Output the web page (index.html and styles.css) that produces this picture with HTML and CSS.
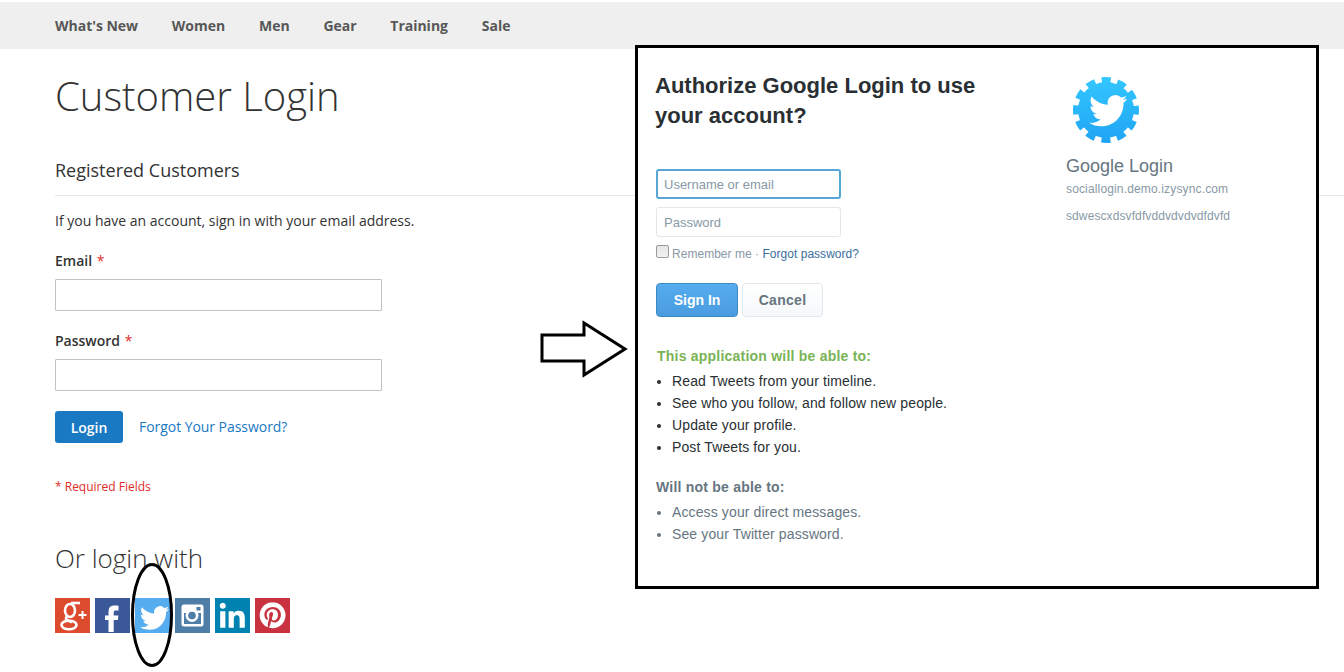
FILE: index.html
```html
<!DOCTYPE html>
<html lang="en">
<head>
<meta charset="utf-8">
<title>Customer Login</title>
<link rel="stylesheet" href="styles.css">
</head>
<body>
<nav class="nav">
  <a>What's New</a><a>Women</a><a>Men</a><a>Gear</a><a>Training</a><a>Sale</a>
</nav>
<main class="main">
  <h1 class="title">Customer Login</h1>
  <h2 class="subtitle">Registered Customers</h2>
  <p class="intro">If you have an account, sign in with your email address.</p>
  <label class="label">Email <span class="req">*</span></label>
  <input class="field" type="text">
  <label class="label label-pw">Password <span class="req">*</span></label>
  <input class="field" type="password">
  <div class="actions">
    <button class="login">Login</button>
    <a class="forgot">Forgot Your Password?</a>
  </div>
  <p class="required">* Required Fields</p>
  <h3 class="orlogin">Or login with</h3>
  <div class="socials">
    <span class="soc gp"><svg viewBox="0 0 35 35" width="35" height="35"><g fill="none" stroke="#fff" stroke-width="2.6"><ellipse cx="15" cy="12.500" rx="5" ry="6.500"/><ellipse cx="14" cy="27" rx="7.500" ry="4.300"/><path d="M12 18.500c-2 1.500-1 3 1 4l4 1.800"/><path d="M16 5h9"/></g><path d="M26.500 13h2v3h3v2h-3v3h-2v-3h-3v-2h3z" fill="#fff"/></svg></span>
    <span class="soc fb"><svg viewBox="0 0 35 35" width="35" height="35"><path d="M13.500 34V22H10v-4.500h3.500V14C13.500 9.500 15.500 7.500 19.500 7.500c1.500 0 3 .1 4 .2V12.500h-2.500c-1.700 0-2.300.6-2.300 2.200v2.800h4.700L22.800 22h-4.100v12z" fill="#fff"/></svg></span>
    <span class="soc tw"><svg viewBox="0 0 24 24" width="35" height="35"><g transform="translate(3.400 3.800) scale(.83)"><path d="M23.953 4.570a10 10 0 01-2.825.775 4.958 4.958 0 002.163-2.723c-.951.555-2.005.959-3.127 1.184a4.920 4.920 0 00-8.384 4.482C7.690 8.095 4.067 6.130 1.640 3.162a4.822 4.822 0 00-.666 2.475c0 1.710.870 3.213 2.188 4.096a4.904 4.904 0 01-2.228-.616v.060a4.923 4.923 0 003.946 4.827 4.996 4.996 0 01-2.212.085 4.936 4.936 0 004.604 3.417 9.867 9.867 0 01-6.102 2.105c-.390 0-.779-.023-1.170-.067a13.995 13.995 0 007.557 2.209c9.053 0 13.998-7.496 13.998-13.985 0-.210 0-.420-.015-.630A9.935 9.935 0 0024 4.590z" fill="#fff"/></g></svg></span>
    <span class="soc ig"><svg viewBox="0 0 35 35" width="35" height="35"><rect x="6.500" y="6.500" width="22" height="22" rx="2.500" fill="#fff"/><rect x="9" y="15" width="17" height="11" fill="#4e7ea8"/><circle cx="17" cy="17.500" r="6.500" fill="#fff"/><circle cx="17" cy="17.500" r="3.800" fill="#4e7ea8"/><rect x="21.500" y="9" width="4" height="3.500" fill="#4e7ea8"/></svg></span>
    <span class="soc li"><svg viewBox="0 0 24 24" width="35" height="35"><path d="M20.447 20.452h-3.554v-5.569c0-1.328-.027-3.037-1.852-3.037-1.853 0-2.136 1.445-2.136 2.939v5.667H9.351V9h3.414v1.561h.046c.477-.900 1.637-1.850 3.370-1.850 3.601 0 4.267 2.370 4.267 5.455v6.286zM5.337 7.433c-1.144 0-2.063-.926-2.063-2.065 0-1.138.920-2.063 2.063-2.063 1.140 0 2.064.925 2.064 2.063 0 1.139-.925 2.065-2.064 2.065zm1.782 13.019H3.555V9h3.564v11.452z" fill="#fff"/></svg></span>
    <span class="soc pi"><svg viewBox="0 0 24 24" width="35" height="35"><g transform="translate(3.200 2.900) scale(.74)"><path d="M12.017 0C5.396 0 .029 5.367.029 11.987c0 5.079 3.158 9.417 7.618 11.162-.105-.949-.199-2.403.041-3.439.219-.937 1.406-5.957 1.406-5.957s-.359-.720-.359-1.781c0-1.663.967-2.911 2.168-2.911 1.024 0 1.518.769 1.518 1.688 0 1.029-.653 2.567-.992 3.992-.285 1.193.600 2.165 1.775 2.165 2.128 0 3.768-2.245 3.768-5.487 0-2.861-2.063-4.869-5.008-4.869-3.410 0-5.409 2.562-5.409 5.199 0 1.033.394 2.143.889 2.741.099.120.112.225.085.345-.090.375-.293 1.199-.334 1.363-.053.225-.172.271-.401.165-1.495-.690-2.433-2.878-2.433-4.646 0-3.776 2.748-7.252 7.920-7.252 4.158 0 7.392 2.967 7.392 6.923 0 4.135-2.607 7.462-6.233 7.462-1.214 0-2.354-.629-2.758-1.379l-.749 2.848c-.269 1.045-1.004 2.352-1.498 3.146 1.123.345 2.306.535 3.550.535 6.607 0 11.985-5.365 11.985-11.987C23.970 5.390 18.592.026 11.985.026L12.017 0z" fill="#fff"/></g></svg></span>
  </div>
</main>

<svg class="ring" width="46" height="108" viewBox="0 0 46 108"><ellipse cx="23" cy="54" rx="19.500" ry="50.500" fill="none" stroke="#000" stroke-width="3"/></svg>
<svg class="arrow" width="96" height="60" viewBox="0 0 96 60"><polygon points="3,15 45,15 45,3 86,29 45,55 45,41 3,41" fill="#fff" stroke="#000" stroke-width="3"/></svg>

<section class="popup">
  <div class="auth">
    <h2 class="auth-title">Authorize Google Login to use your account?</h2>
    <input class="tw-field tw-focus" type="text" placeholder="Username or email">
    <input class="tw-field" type="text" placeholder="Password">
    <div class="remember"><input class="check" type="checkbox"><span class="remember-text">Remember me · <a>Forgot password?</a></span></div>
    <div class="tw-buttons">
      <button class="signin">Sign In</button>
      <button class="cancel">Cancel</button>
    </div>
    <p class="able">This application will be able to:</p>
    <ul class="perm">
      <li>Read Tweets from your timeline.</li>
      <li>See who you follow, and follow new people.</li>
      <li>Update your profile.</li>
      <li>Post Tweets for you.</li>
    </ul>
    <p class="notable">Will not be able to:</p>
    <ul class="perm perm-not">
      <li>Access your direct messages.</li>
      <li>See your Twitter password.</li>
    </ul>
  </div>
  <aside class="app">
    <svg class="gear" width="70" height="70" viewBox="0 0 70 70">
      <defs><linearGradient id="gearfill" gradientUnits="userSpaceOnUse" x1="0" y1="0" x2="0" y2="70"><stop offset="0" stop-color="#35c8ff"/><stop offset="1" stop-color="#1ea3f4"/></linearGradient></defs>
      <circle cx="35" cy="35" r="28" fill="url(#gearfill)"/>
      <circle cx="35" cy="35" r="30" fill="none" stroke="url(#gearfill)" stroke-width="6" stroke-dasharray="9 6.708" stroke-dashoffset="4.500"/>
      <g transform="translate(18 16.500) scale(1.600)"><path d="M23.953 4.570a10 10 0 01-2.825.775 4.958 4.958 0 002.163-2.723c-.951.555-2.005.959-3.127 1.184a4.920 4.920 0 00-8.384 4.482C7.690 8.095 4.067 6.130 1.640 3.162a4.822 4.822 0 00-.666 2.475c0 1.710.870 3.213 2.188 4.096a4.904 4.904 0 01-2.228-.616v.060a4.923 4.923 0 003.946 4.827 4.996 4.996 0 01-2.212.085 4.936 4.936 0 004.604 3.417 9.867 9.867 0 01-6.102 2.105c-.390 0-.779-.023-1.170-.067a13.995 13.995 0 007.557 2.209c9.053 0 13.998-7.496 13.998-13.985 0-.210 0-.420-.015-.630A9.935 9.935 0 0024 4.590z" fill="#fff"/></g>
    </svg>
    <div class="app-name">Google Login</div>
    <div class="app-url">sociallogin.demo.izysync.com</div>
    <div class="app-desc">sdwescxdsvfdfvddvdvdvdfdvfd</div>
  </aside>
</section>
</body>
</html>
```

FILE: styles.css
```css
* { box-sizing: border-box; }
html, body { margin: 0; height: 672px; overflow: hidden; }
body {
  position: relative;
  padding-top: 2px;
  background: #fff;
  font-family: "Open Sans", sans-serif;
  color: #333;
}
.nav {
  display: flex;
  align-items: center;
  gap: 33.8px;
  height: 47px;
  padding-left: 55px;
  background: #efefef;
  font-size: 14px;
  font-weight: 700;
  letter-spacing: -.02px;
  color: #575757;
}
.main { padding: 0 55px; }
.title {
  margin: 21px 0 0;
  font-size: 40px;
  font-weight: 300;
  line-height: 52px;
}
.subtitle {
  margin: 36px -55px 0 0;
  height: 38px;
  border-bottom: 1px solid #e8e8e8;
  font-size: 18px;
  font-weight: 400;
  line-height: 24px;
}
.intro { margin: 15px 0 0; font-size: 14px; line-height: 20px; }
.label {
  display: block;
  margin-top: 20px;
  font-size: 14px;
  font-weight: 600;
  line-height: 20px;
}
.req { color: #e02b27; font-weight: 400; margin-left: 1px; }
.field {
  display: block;
  width: 327px;
  height: 32px;
  margin-top: 8px;
  border: 1px solid #c2c2c2;
  border-radius: 1px;
  background: #fff;
}
.actions { display: flex; align-items: center; gap: 16px; margin-top: 20px; }
.login {
  width: 68px;
  height: 32px;
  border: 0;
  border-radius: 3px;
  background: #1979c3;
  color: #fff;
  font: 600 14px "Open Sans", sans-serif;
}
.forgot { padding-bottom: 2px; color: #1979c3; font-size: 14px; letter-spacing: -.05px; }
.required { margin: 35px 0 0; color: #e02b27; font-size: 12px; line-height: 17px; }
.orlogin { margin: 46px 0 0; font-size: 26px; font-weight: 300; line-height: 34px; }
.socials { display: flex; gap: 5px; margin-top: 23px; }
.soc { display: block; width: 35px; height: 35px; }
.soc svg { display: block; }
.gp { background: #dd4b2e; }
.fb { background: #3b5998; }
.tw { background: #55acee; }
.ig { background: #4e7ea8; }
.li { background: #0083b0; }
.pi { background: #c9323f; }
.ring { position: absolute; left: 129px; top: 561px; }
.arrow { position: absolute; left: 539px; top: 320px; }
.popup {
  position: absolute;
  left: 635px;
  top: 45px;
  width: 684px;
  height: 544px;
  display: flex;
  padding: 23px 0 0 18px;
  border: 3px solid #000;
  background: #fff;
  font-family: "Liberation Sans", Arial, sans-serif;
}
.auth { width: 410px; font-size: 14px; color: #292f33; }
.auth-title {
  width: 340px;
  margin: 0 0 0 -1px;
  font-size: 22px;
  font-weight: 700;
  line-height: 30px;
  color: #292f33;
}
.tw-field {
  display: block;
  width: 185px;
  height: 30px;
  margin-top: 8px;
  padding: 0 7px;
  border: 1px solid #e1e8ed;
  border-radius: 3px;
  background: #fff;
  font: 13px "Liberation Sans", Arial, sans-serif;
}
.tw-field::placeholder { color: #8899a6; opacity: 1; }
.tw-focus { margin-top: 38px; border: 2px solid #56a7d8; padding: 0 6px; }
.remember {
  display: flex;
  align-items: center;
  gap: 3px;
  height: 16px;
  margin-top: 8px;
  font-size: 12px;
  color: #8899a6;
}
.remember-text { padding-top: 2px; letter-spacing: .03px; }
.check {
  appearance: none;
  width: 13px;
  height: 13px;
  margin: -4px 0 0;
  border: 1px solid #9a9a9a;
  border-radius: 2px;
  background: linear-gradient(#e6e6e6, #f2f2f2);
}
.remember a { color: #3a6ea0; }
.tw-buttons { display: flex; gap: 4px; margin-top: 22px; }
.signin, .cancel {
  height: 34px;
  border-radius: 4px;
  font: 700 14px "Liberation Sans", Arial, sans-serif;
}
.signin {
  width: 82px;
  border: 1px solid #3b88c3;
  background: linear-gradient(#55acee, #4a9ce0);
  color: #fff;
}
.cancel {
  width: 81px;
  border: 1px solid #e1e8ed;
  background: linear-gradient(#fff, #f5f8fa);
  color: #66757f;
  letter-spacing: .3px;
}
.able {
  margin: 31px 0 0 1px;
  font-weight: 700;
  line-height: 16px;
  letter-spacing: .22px;
  color: #79b356;
}
.perm { margin: 6px 0 0; padding: 0 0 0 16px; line-height: 22px; color: #292f33; letter-spacing: .12px; }
.notable { margin: 21px 0 0; font-weight: 700; line-height: 16px; letter-spacing: .22px; color: #66757f; }
.perm-not { color: #66757f; }
.app { padding-top: 4px; }
.gear { display: block; margin-left: 5px; }
.app-name { margin-top: 10px; font-size: 18px; line-height: 22px; color: #66757f; }
.app-url { margin-top: 4px; font-size: 12px; line-height: 16px; letter-spacing: .15px; color: #8899a6; }
.app-desc { margin-top: 11px; font-size: 12px; line-height: 16px; letter-spacing: .1px; color: #8899a6; }
```
